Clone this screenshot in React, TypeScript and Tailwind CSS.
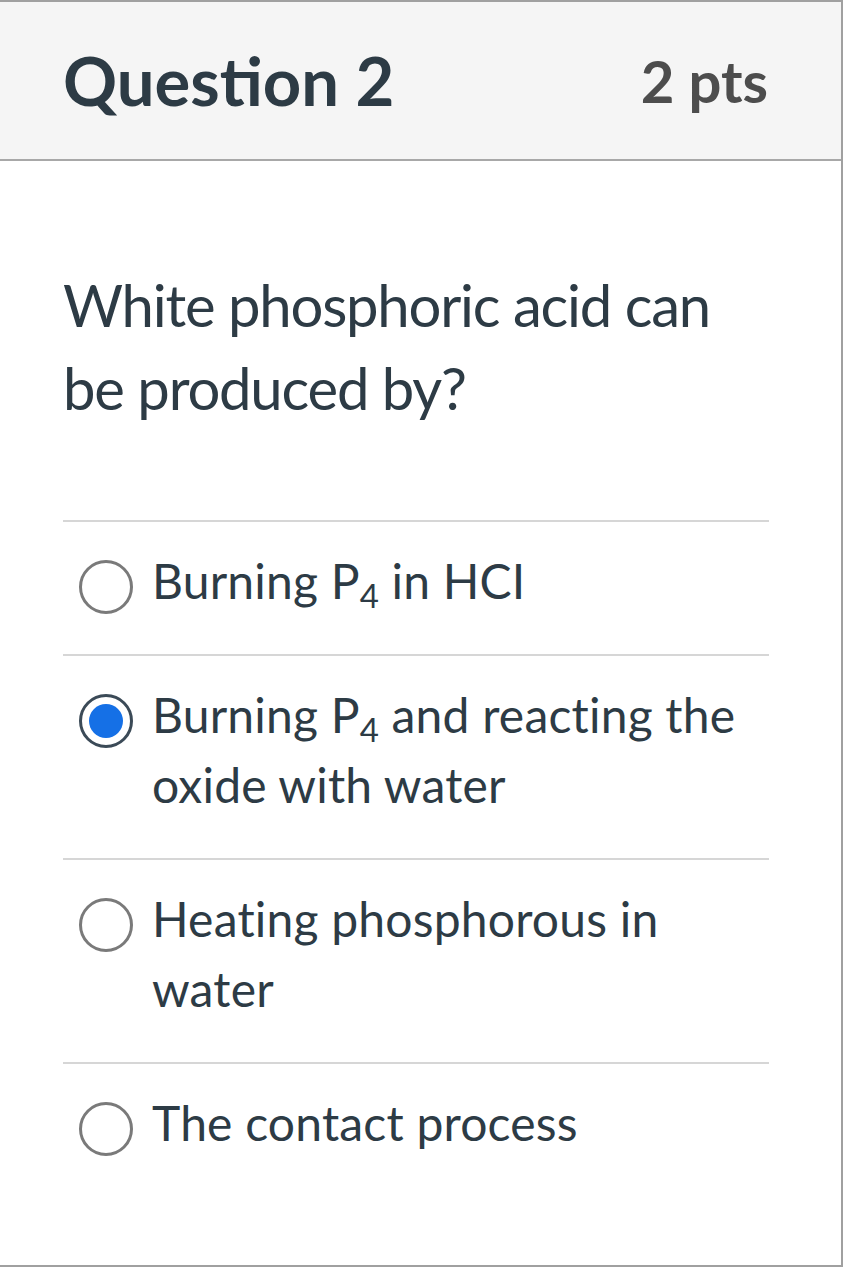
const options = [
  { id: 'a', text: <>Burning P<Sub>4</Sub> in HCI</> },
  { id: 'b', text: <>Burning P<Sub>4</Sub> and reacting the oxide with water</> },
  { id: 'c', text: <>Heating phosphorous in water</> },
  { id: 'd', text: <>The contact process</> },
];

function Sub({ children }: { children: React.ReactNode }) {
  return <span className="relative top-[9px] text-[33px] leading-none">{children}</span>;
}

function Radio({ checked }: { checked: boolean }) {
  if (checked) {
    return (
      <div className="mt-[14px] flex h-[54px] w-[54px] shrink-0 items-center justify-center rounded-full border-[3px] border-[#3b4a57] bg-white">
        <div className="h-[34px] w-[34px] rounded-full bg-[#1570e6]" />
      </div>
    );
  }
  return <div className="mt-[14px] h-[54px] w-[54px] shrink-0 rounded-full border-[3px] border-[#7a7a7a] bg-white" />;
}

export default function App() {
  const selected = 'b';

  return (
    <div className="min-h-[1280px] bg-white font-['Lato',sans-serif] text-[#2d3b45]">
      <div className="w-[843px] border-t-2 border-r-2 border-b-2 border-[#a0a0a0]">
        {/* Header */}
        <div className="flex h-[159px] items-center justify-between border-b-2 border-[#a8a8a8] bg-[#f5f5f5] pl-[63px] pr-[73px]">
          <h2 className="text-[67px] font-bold leading-none">Question 2</h2>
          <span className="text-[58px] font-bold leading-none text-[#4d4d4d]">2 pts</span>
        </div>

        {/* Body */}
        <div className="pl-[63px] pr-[72px] pt-[102px] pb-[107px]">
          <p className="mb-[91px] text-[58px] leading-[83px] tracking-[-1.2px]">
            White phosphoric acid can
            <br />
            be produced by?
          </p>

          {options.map(opt => (
            <div key={opt.id} className="flex gap-[19px] border-t-2 border-[#d6d6d6] pl-[16px] pt-[24px] pb-[38px] last:pb-0">
              <Radio checked={opt.id === selected} />
              <div className="max-w-[610px] text-[48px] leading-[70px] tracking-[0.2px]">{opt.text}</div>
            </div>
          ))}
        </div>
      </div>
    </div>
  );
}
